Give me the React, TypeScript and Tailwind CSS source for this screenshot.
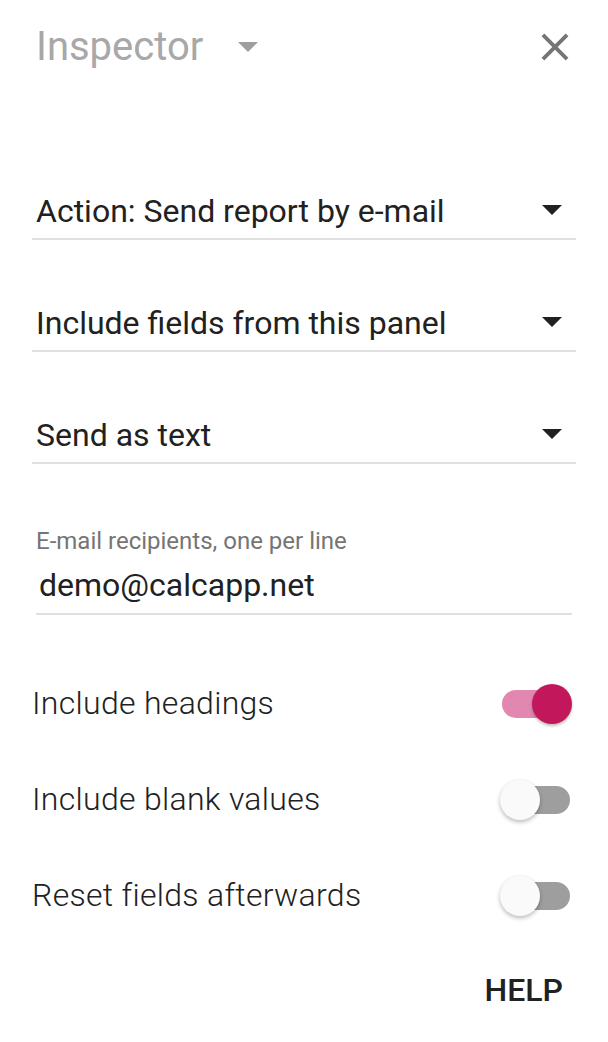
import React from "react";

function Caret({ color, className }: { color: string; className?: string }) {
  return (
    <svg width="20" height="10" viewBox="0 0 20 10" className={className}>
      <path d="M0 0 L20 0 L10 10 Z" fill={color} />
    </svg>
  );
}

function SelectRow({ label }: { label: string }) {
  return (
    <div className="h-[112px] flex items-end">
      <div className="w-full flex items-center justify-between pl-[4px] pr-[14px] pb-[7px] border-b-2 border-[#e0e0e0]">
        <span className="text-[32px] leading-[40px] text-[#212121]">{label}</span>
        <Caret color="#212121" className="mb-[3px]" />
      </div>
    </div>
  );
}

function Toggle({ on }: { on: boolean }) {
  return (
    <div className="relative w-[72px] h-[40px] flex items-center">
      <div
        className={
          on
            ? "ml-[2px] w-[68px] h-[28px] rounded-full bg-[#e288b0]"
            : "ml-[2px] w-[68px] h-[28px] rounded-full bg-[#9e9e9e]"
        }
      />
      <div
        className={
          on
            ? "absolute left-[32px] top-0 w-[40px] h-[40px] rounded-full bg-[#c2185b] shadow-[0_2px_3px_rgba(0,0,0,0.25)]"
            : "absolute left-0 top-0 w-[40px] h-[40px] rounded-full bg-[#fafafa] shadow-[0_2px_4px_rgba(0,0,0,0.28)]"
        }
      />
    </div>
  );
}

function ToggleRow({ label, on }: { label: string; on: boolean }) {
  return (
    <div className="h-[96px] flex items-center justify-between pr-[36px]">
      <span className="text-[32px] leading-[40px] font-light tracking-[0.3px] text-[#212121] mt-[-2px]">
        {label}
      </span>
      <Toggle on={on} />
    </div>
  );
}

export default function App() {
  return (
    <div
      className="w-[608px] h-[1042px] bg-white flex flex-col overflow-hidden"
      style={{ fontFamily: "Roboto, 'Noto Sans', Arial, sans-serif" }}
    >
      <div className="h-[94px] flex items-center justify-between pl-[36px] pr-[30px]">
        <div className="flex items-center">
          <span className="text-[40px] leading-[48px] text-[#a8a8a8]">Inspector</span>
          <Caret color="#9e9e9e" className="ml-[35px]" />
        </div>
        <svg width="46" height="46" viewBox="0 0 24 24">
          <path
            fill="#757575"
            d="M19 6.41L17.59 5 12 10.59 6.41 5 5 6.41 10.59 12 5 17.59 6.41 19 12 13.41 17.59 19 19 17.59 13.41 12z"
          />
        </svg>
      </div>

      <div className="pt-[34px] px-[32px]">
        <SelectRow label="Action: Send report by e-mail" />
        <SelectRow label="Include fields from this panel" />
        <SelectRow label="Send as text" />

        <div className="mx-[4px] pt-[63px] pb-[8px] border-b-2 border-[#e0e0e0] flex flex-col gap-[10px]">
          <span className="text-[24px] leading-[28px] text-[#757575]">
            E-mail recipients, one per line
          </span>
          <span className="pl-[3px] text-[32px] leading-[40px] text-[#212121]">
            demo@calcapp.net
          </span>
        </div>
      </div>

      <div className="pt-[41px] pl-[32px]">
        <ToggleRow label="Include headings" on={true} />
        <ToggleRow label="Include blank values" on={false} />
        <ToggleRow label="Reset fields afterwards" on={false} />
      </div>

      <div className="h-[92px] flex items-center justify-end pr-[45px]">
        <span className="text-[32px] leading-[40px] font-medium text-[#212121]">HELP</span>
      </div>
    </div>
  );
}
